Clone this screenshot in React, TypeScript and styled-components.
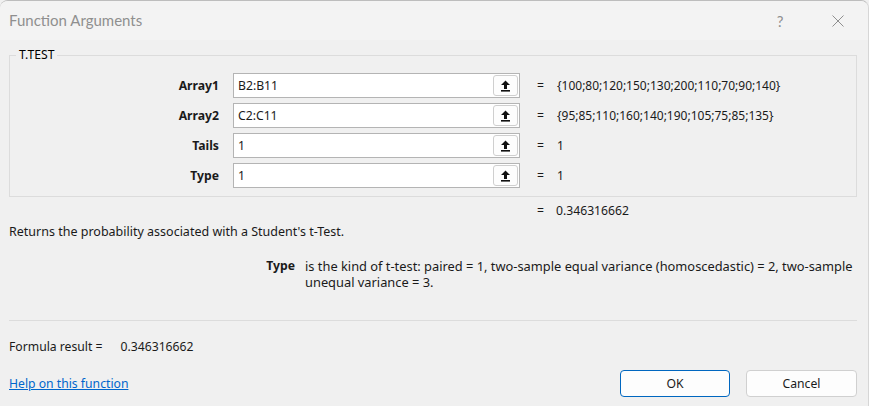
import React from "react";
import styled, { createGlobalStyle } from "styled-components";

const GlobalStyle = createGlobalStyle`
  html, body { margin: 0; padding: 0; background: #f0f0f0; }
  body { font-family: "Noto Sans", "Open Sans", sans-serif; font-size: 12.2px; color: #1a1a1a; }
  * { box-sizing: border-box; }
`;

const Window = styled.div`
  width: 869px;
  height: 406px;
  background: #f0f0f0;
  border-top: 1px solid #bdbdbd;
  border-right: 1px solid #d6d6d6;
  border-top-left-radius: 8px;
  border-top-right-radius: 8px;
  display: flex;
  flex-direction: column;
  overflow: hidden;
  position: relative;
`;

const BehindTab = styled.div`
  position: absolute;
  top: -1px;
  left: 81px;
  width: 80px;
  height: 1px;
  background: #1e8a4c;
`;

const TitleBar = styled.div`
  height: 39px;
  display: flex;
  align-items: center;
  padding-left: 9px;
  background: #f3f3f3;
  flex-shrink: 0;
`;

const Title = styled.div`
  font-family: Lato, "Noto Sans", sans-serif;
  font-size: 15px;
  color: #8f8f8f;
  flex: 1;
  margin-top: -2px;
`;

const TitleButton = styled.div<{ $w: number }>`
  width: ${(p) => p.$w}px;
  height: 39px;
  display: flex;
  align-items: center;
  justify-content: center;
  color: #8f8f8f;
  font-family: Lato, "Noto Sans", sans-serif;
  font-size: 15px;
`;

const Body = styled.div`
  flex: 1;
  display: flex;
  flex-direction: column;
  padding: 0 11px 0 9px;
`;

const Group = styled.fieldset`
  margin: 7px 0 0 0;
  padding: 12px 0 8px 0;
  border: 1px solid #dcdcdc;
  display: grid;
  grid-template-columns: 209px 287px auto 1fr;
  column-gap: 14px;
  row-gap: 5px;
  align-items: center;
`;

const Legend = styled.legend`
  margin-left: 6px;
  padding: 0 3px;
  color: #000;
  line-height: 16px;
  margin-bottom: -2px;
`;

const ArgLabel = styled.div`
  font-weight: bold;
  text-align: right;
  color: #1a1a1a;
`;

const InputBox = styled.div`
  height: 25px;
  background: #fff;
  border: 1px solid #b4b4b4;
  display: flex;
  align-items: center;
  padding: 0 1px 0 4px;
`;

const InputText = styled.div`
  flex: 1;
  color: #1a1a1a;
`;

const RefButton = styled.div`
  width: 25px;
  height: 21px;
  border: 1px solid #cfcfcf;
  border-radius: 3px;
  background: #fdfdfd;
  display: flex;
  align-items: center;
  justify-content: center;
`;

const Eq = styled.div`
  padding-left: 3px;
  width: 20px;
`;

const Value = styled.div`
  color: #1a1a1a;
  margin-left: -11px;
  font-size: 12px;
`;

const ResultLine = styled.div`
  margin-top: 6px;
  height: 16px;
  line-height: 16px;
  padding-left: 528px;
  display: flex;
  gap: 12px;
`;

const Description = styled.div`
  margin-top: 5px;
  line-height: 16px;
  font-size: 12.5px;
`;

const ArgHelp = styled.div`
  margin-top: 18px;
  display: grid;
  grid-template-columns: 286px 1fr;
  column-gap: 10px;
  line-height: 16px;
  height: 62px;
  font-size: 12.85px;
`;

const ArgHelpName = styled.div`
  font-weight: bold;
  text-align: right;
  font-size: 12.2px;
`;

const Separator = styled.div`
  height: 1px;
  background: #dcdcdc;
`;

const FormulaResult = styled.div`
  margin-top: 18px;
  line-height: 16px;
  display: flex;
  gap: 18px;
`;

const Footer = styled.div`
  margin-top: 15px;
  display: flex;
  align-items: center;
`;

const HelpLink = styled.a`
  color: #0066cc;
  text-decoration: underline;
  flex: 1;
  cursor: pointer;
`;

const Button = styled.button<{ $primary?: boolean }>`
  width: ${(p) => (p.$primary ? 110 : 111)}px;
  height: 27px;
  margin-left: ${(p) => (p.$primary ? 0 : 16)}px;
  border-radius: 4px;
  border: 1px solid ${(p) => (p.$primary ? "#0067c0" : "#d0d0d0")};
  background: #fdfdfd;
  font-family: inherit;
  font-size: 12.2px;
  color: #1a1a1a;
  padding: 0;
`;

const UpIcon = () => (
  <svg width="11" height="12" viewBox="0 0 11 12">
    <path d="M5.5 0.5 L10 5 L7 5 L7 9 L4 9 L4 5 L1 5 Z" fill="#111" />
    <rect x="1" y="10" width="9" height="1.6" fill="#111" />
  </svg>
);

const CloseIcon = () => (
  <svg width="12" height="12" viewBox="0 0 12 12">
    <path d="M0.5 0.5 L11.5 11.5 M11.5 0.5 L0.5 11.5" stroke="#8f8f8f" strokeWidth="1" />
  </svg>
);

const args = [
  { name: "Array1", input: "B2:B11", value: "{100;80;120;150;130;200;110;70;90;140}" },
  { name: "Array2", input: "C2:C11", value: "{95;85;110;160;140;190;105;75;85;135}" },
  { name: "Tails", input: "1", value: "1" },
  { name: "Type", input: "1", value: "1" },
];

export default function App() {
  return (
    <>
      <GlobalStyle />
      <Window>
        <BehindTab />
        <TitleBar>
          <Title>Function Arguments</Title>
          <TitleButton $w={56}>?</TitleButton>
          <TitleButton $w={60}>
            <CloseIcon />
          </TitleButton>
        </TitleBar>
        <Body>
          <Group>
            <Legend>T.TEST</Legend>
            {args.map((a) => (
              <React.Fragment key={a.name}>
                <ArgLabel>{a.name}</ArgLabel>
                <InputBox>
                  <InputText>{a.input}</InputText>
                  <RefButton>
                    <UpIcon />
                  </RefButton>
                </InputBox>
                <Eq>=</Eq>
                <Value>{a.value}</Value>
              </React.Fragment>
            ))}
          </Group>
          <ResultLine>
            <span>=</span>
            <span>0.346316662</span>
          </ResultLine>
          <Description>Returns the probability associated with a Student's t-Test.</Description>
          <ArgHelp>
            <ArgHelpName>Type</ArgHelpName>
            <div>
              is the kind of t-test: paired = 1, two-sample equal variance (homoscedastic) = 2, two-sample
              unequal variance = 3.
            </div>
          </ArgHelp>
          <Separator />
          <FormulaResult>
            <span>Formula result =</span>
            <span>0.346316662</span>
          </FormulaResult>
          <Footer>
            <HelpLink>Help on this function</HelpLink>
            <Button $primary>OK</Button>
            <Button>Cancel</Button>
          </Footer>
        </Body>
      </Window>
    </>
  );
}
